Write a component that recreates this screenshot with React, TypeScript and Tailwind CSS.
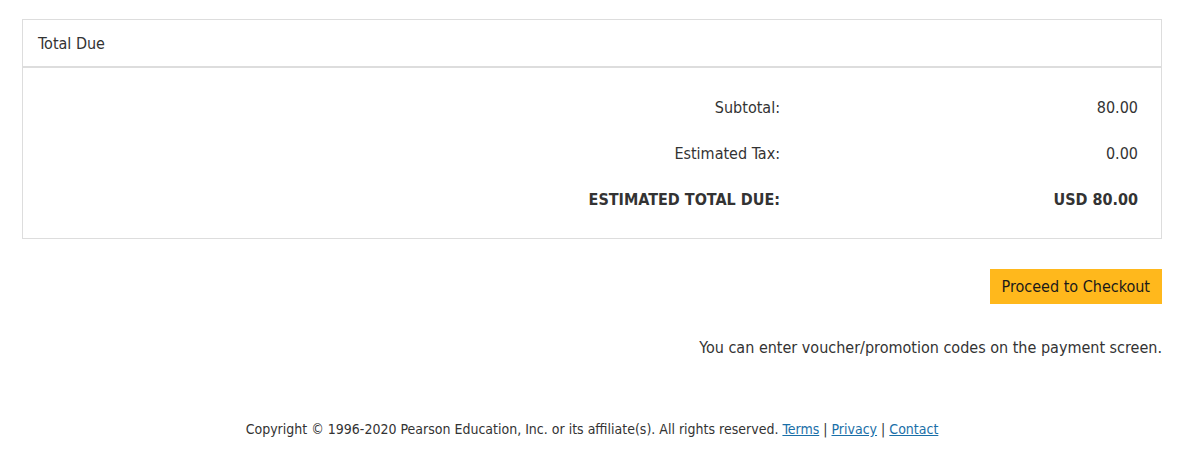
const rows = [
  { label: "Subtotal:", value: "80.00" },
  { label: "Estimated Tax:", value: "0.00" },
];

export default function App() {
  return (
    <div className="min-h-[449px] bg-white text-[#333] [font-family:'DejaVu_Sans_Condensed','DejaVu_Sans',sans-serif] text-[16px] leading-[22px]">
      <div className="ml-[22px] w-[1140px] pt-[19px]">
        <section className="border border-[#ddd]">
          <div className="flex h-[48px] items-center border-b-2 border-[#ddd] px-[15px] pt-[2px]">Total Due</div>
          <div className="px-[23px] pt-[17px] pb-[15px]">
            {rows.map((r) => (
              <div key={r.label} className="flex h-[46px] items-center">
                <div className="w-[734px] text-right">{r.label}</div>
                <div className="flex-1 text-right">{r.value}</div>
              </div>
            ))}
            <div className="flex h-[46px] items-center font-bold">
              <div className="w-[734px] text-right">ESTIMATED TOTAL DUE:</div>
              <div className="flex-1 text-right">USD 80.00</div>
            </div>
          </div>
        </section>

        <div className="mt-[30px] flex justify-end">
          <button className="h-[35px] bg-[#ffb81c] px-[12px] text-[#1a1a1a]">Proceed to Checkout</button>
        </div>

        <p className="mt-[33px] text-right">You can enter voucher/promotion codes on the payment screen.</p>

        <footer className="mt-[60px] text-center text-[14px] leading-[20px]">
          Copyright © 1996-2020 Pearson Education, Inc. or its affiliate(s). All rights reserved.{" "}
          <a href="#" className="text-[#1a6fa8] underline">Terms</a> |{" "}
          <a href="#" className="text-[#1a6fa8] underline">Privacy</a> |{" "}
          <a href="#" className="text-[#1a6fa8] underline">Contact</a>
        </footer>
      </div>
    </div>
  );
}
